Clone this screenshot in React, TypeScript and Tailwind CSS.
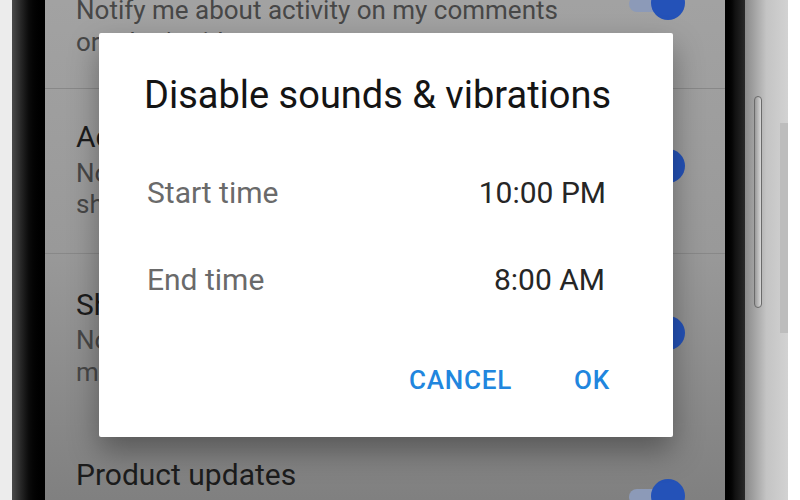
const font = { fontFamily: "Roboto, 'Noto Sans', sans-serif" };

function Toggle({ top }: { top: number }) {
  return (
    <div className="absolute right-[40px] h-[34px] w-[60px]" style={{ top }}>
      <div className="absolute left-[4px] top-[10px] h-[16px] w-[46px] rounded-full bg-[#8c9ab8]" />
      <div className="absolute right-0 top-0 h-[34px] w-[34px] rounded-full bg-[#2452b8]" />
    </div>
  );
}

export default function App() {
  return (
    <div className="flex h-[500px] w-[800px] overflow-hidden bg-white" style={font}>
      {/* left phone edge */}
      <div className="w-[12px] bg-[#ececec]" />
      <div className="w-[33px] bg-gradient-to-r from-[#4a4a4a] via-[#0c0c0c] to-black" />

      {/* screen */}
      <div className="relative w-[680px] overflow-hidden bg-gradient-to-b from-[#a2a2a2] via-[#999999] to-[#808080]">
        <div className="flex flex-col">
          <div className="relative h-[89px] border-b border-[#888888] pl-[31px]">
            <p className="-mt-[6px] whitespace-nowrap text-[26px] leading-[32px] text-[#474747]">
              Notify me about activity on my comments
            </p>
            <p className="whitespace-nowrap text-[26px] leading-[32px] text-[#474747]">or other's videos</p>
            <Toggle top={-14} />
          </div>
          <div className="relative h-[165px] border-b border-[#888888] pl-[31px] pt-[30px]">
            <p className="mb-[3px] whitespace-nowrap text-[30px] leading-[36px] text-[#1c1c1c]">Activity on my channel</p>
            <p className="whitespace-nowrap text-[26px] leading-[31px] text-[#474747]">Notify me about activity on my channel</p>
            <p className="whitespace-nowrap text-[26px] leading-[31px] text-[#474747]">shared videos</p>
            <Toggle top={60} />
          </div>
          <div className="relative h-[171px] border-b border-[#888888] pl-[31px] pt-[33px]">
            <p className="mb-[1px] whitespace-nowrap text-[30px] leading-[36px] text-[#1c1c1c]">Shared content</p>
            <p className="whitespace-nowrap text-[26px] leading-[32px] text-[#474747]">Notify me when others share my content</p>
            <p className="whitespace-nowrap text-[26px] leading-[32px] text-[#474747]">mentioning me</p>
            <Toggle top={62} />
          </div>
          <div className="relative h-[80px] pl-[31px] pt-[32px]">
            <p className="whitespace-nowrap text-[30px] leading-[36px] text-[#1c1c1c]">Product updates</p>
            <Toggle top={54} />
          </div>
        </div>

        {/* dialog */}
        <div className="absolute left-[54px] top-[33px] flex h-[404px] w-[574px] flex-col rounded-[2px] bg-white shadow-[0_14px_30px_rgba(0,0,0,0.35)]">
          <h2 className="pl-[45px] pt-[38px] text-[38px] leading-[48px] text-[#141414]">
            Disable sounds &amp; vibrations
          </h2>
          <div className="mt-[54px] flex items-center justify-between pl-[48px] pr-[67px]">
            <span className="text-[30px] leading-[40px] text-[#6a6a6a]">Start time</span>
            <span className="text-[30px] leading-[40px] text-[#262626]">10:00 PM</span>
          </div>
          <div className="mt-[47px] flex items-center justify-between pl-[48px] pr-[68px]">
            <span className="text-[30px] leading-[40px] text-[#6a6a6a]">End time</span>
            <span className="text-[30px] leading-[40px] text-[#262626]">8:00 AM</span>
          </div>
          <div className="mt-[63px] flex items-center justify-end gap-[62px] pr-[63px]">
            <span className="text-[26px] font-medium leading-[34px] tracking-[0.03em] text-[#2186de]">CANCEL</span>
            <span className="text-[26px] font-medium leading-[34px] tracking-[0.03em] text-[#2186de]">OK</span>
          </div>
        </div>
      </div>

      {/* right phone edge */}
      <div className="w-[20px] bg-gradient-to-r from-black via-[#111111] to-[#2a2a2a]" />
      <div className="relative w-[43px] bg-gradient-to-r from-[#8a8a8a] via-[#c4c4c4] to-[#d2d2d2]">
        <div className="absolute left-[9px] top-[96px] h-[212px] w-[8px] rounded-full border border-[#6a6a6a] bg-gradient-to-r from-[#9a9a9a] to-[#d8d8d8]" />
        <div className="absolute right-0 top-[123px] h-[210px] w-[8px] bg-[#bdbdbd]" />
      </div>
      <div className="flex-1 bg-white" />
    </div>
  );
}
